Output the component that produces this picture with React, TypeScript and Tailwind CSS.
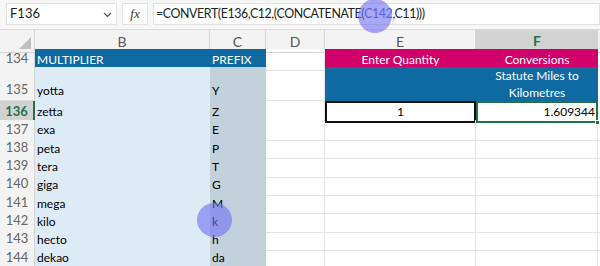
import React from 'react';

const cols = 'grid grid-cols-[35px_175px_56px_59px_151px_122px_1fr]';
const cellFont = { fontFamily: 'Lato, "Liberation Sans", sans-serif' };

const prefixes: [string, string, string][] = [
  ['137', 'exa', 'E'],
  ['138', 'peta', 'P'],
  ['139', 'tera', 'T'],
  ['140', 'giga', 'G'],
  ['141', 'mega', 'M'],
  ['142', 'kilo', 'k'],
  ['143', 'hecto', 'h'],
  ['144', 'dekao', 'da'],
];

const RowHead: React.FC<{ n: string; active?: boolean }> = ({ n, active }) => (
  <div
    className={
      active
        ? 'flex items-end justify-center pb-[1px] bg-[#d2d2d2] border-r-2 border-r-[#217346] border-b border-b-[#c8c8c8] text-[#217346] font-bold text-[13px]'
        : 'flex items-end justify-center pb-[1px] bg-[#f3f3f3] border-r border-r-[#d4d4d4] border-b border-b-[#dcdcdc] text-[#666] text-[13px]'
    }
  >
    {n}
  </div>
);

const App: React.FC = () => {
  return (
    <div className="w-[600px] h-[266px] overflow-hidden bg-white relative" style={cellFont}>
      {/* formula bar */}
      <div className="h-[30px] bg-[#f7f7f7] flex items-start gap-[5px] pt-[3px] pl-[6px] border-b border-[#dcdcdc]">
        <div className="w-[111px] h-[22px] bg-white border border-[#e2e2e2] flex items-center justify-between pl-[3px] pr-[4px] text-[13px] text-[#222]">
          <span>F136</span>
          <svg width="9" height="6" viewBox="0 0 9 6" className="mt-[1px]">
            <path d="M1 1l3.5 3.5L8 1" fill="none" stroke="#555" strokeWidth="1.2" />
          </svg>
        </div>
        <div className="w-[26px] h-[22px] bg-white border border-[#e2e2e2] flex items-center justify-center text-[13px] text-[#333] italic" style={{ fontFamily: '"Liberation Serif", serif' }}>
          fx
        </div>
        <div className="flex-1 h-[22px] bg-white border border-[#e2e2e2] flex items-center pl-[2px] text-[12.4px] text-[#222] tracking-[-0.4px]">
          =CONVERT(E136,C12,(CONCATENATE(<span className="text-[#2b4fb3]">C142</span>,C11)))
        </div>
      </div>

      {/* column headers */}
      <div className={`${cols} h-[19px] bg-[#f3f3f3] text-[14px] text-[#555]`}>
        <div className="relative border-r border-b border-[#d4d4d4]">
          <div className="absolute right-[3px] bottom-[3px] w-0 h-0 border-l-[12px] border-l-transparent border-b-[12px] border-b-[#bfbfbf]" />
        </div>
        <div className="flex items-center justify-center border-r border-b border-[#d4d4d4]">B</div>
        <div className="flex items-center justify-center border-r border-b border-[#d4d4d4]">C</div>
        <div className="flex items-center justify-center border-r border-b border-[#d4d4d4]">D</div>
        <div className="flex items-center justify-center border-r border-b border-[#d4d4d4]">E</div>
        <div className="flex items-center justify-center bg-[#d2d2d2] border-b-2 border-b-[#217346] text-[#217346] font-bold">F</div>
        <div className="border-b border-[#d4d4d4]" />
      </div>

      {/* row 134 */}
      <div className={`${cols} h-[18.3px] text-[12px]`}>
        <RowHead n="134" />
        <div className="bg-[#0e6aa1] text-white flex items-center pl-[2px]">MULTIPLIER</div>
        <div className="bg-[#0e6aa1] text-white flex items-center pl-[2px]">PREFIX</div>
        <div className="border-r border-b border-[#e4e4e4]" />
        <div className="bg-[#d1006a] text-white flex items-center justify-center">Enter Quantity</div>
        <div className="bg-[#d1006a] text-white flex items-center justify-center">Conversions</div>
        <div />
      </div>

      {/* row 135 */}
      <div className={`${cols} h-[34px] text-[12px]`}>
        <RowHead n="135" />
        <div className="bg-[#ddebf7] text-black flex items-end pl-[2px] pb-[1px]">yotta</div>
        <div className="bg-[#c3d1dd] text-black flex items-end pl-[2px] pb-[1px]">Y</div>
        <div className="border-r border-b border-[#e4e4e4]" />
        <div className="bg-[#0e6aa1]" />
        <div className="bg-[#0e6aa1] text-white flex flex-col items-center justify-center leading-[17px]">
          <span>Statute Miles to</span>
          <span>Kilometres</span>
        </div>
        <div />
      </div>

      {/* row 136 */}
      <div className={`${cols} h-[18.3px] text-[12px]`}>
        <RowHead n="136" active />
        <div className="bg-[#ddebf7] text-black flex items-center pl-[2px]">zetta</div>
        <div className="bg-[#c3d1dd] text-black flex items-center pl-[2px]">Z</div>
        <div className="border-r border-[#e4e4e4]" />
        <div className="border-2 border-[#111] flex items-center justify-center text-black">1</div>
        <div className="relative border-2 border-[#217346] flex items-center justify-end pr-[1px] text-black">
          1.609344
          <div className="absolute right-[-4px] bottom-[-4px] w-[5px] h-[5px] bg-[#217346] border border-white" />
        </div>
        <div />
      </div>

      {prefixes.map(([n, name, p]) => (
        <div key={n} className={`${cols} h-[18.3px] text-[12px]`}>
          <RowHead n={n} />
          <div className="bg-[#ddebf7] text-black flex items-center pl-[2px]">{name}</div>
          <div className="bg-[#c3d1dd] text-black flex items-center pl-[2px]">{p}</div>
          <div className="border-r border-b border-[#e4e4e4]" />
          <div className="border-r border-b border-[#e4e4e4]" />
          <div className="border-r border-b border-[#e4e4e4]" />
          <div className="border-b border-[#e4e4e4]" />
        </div>
      ))}

      {/* touch highlights */}
      <div className="absolute left-[358px] top-[-1px] w-[34px] h-[34px] rounded-full bg-[#6e6ef2]/60" />
      <div className="absolute left-[197px] top-[203px] w-[35px] h-[34px] rounded-full bg-[#6e6ef2]/60" />
    </div>
  );
};

export default App;
